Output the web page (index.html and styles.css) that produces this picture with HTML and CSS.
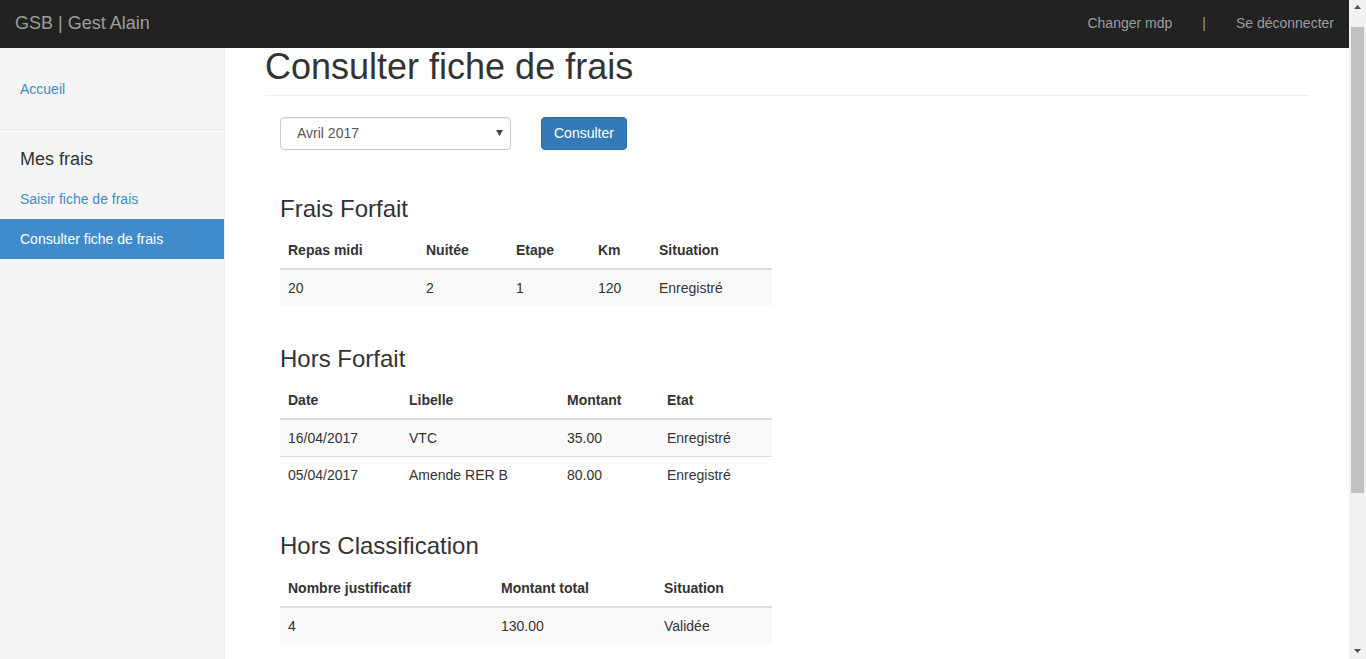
FILE: index.html
```html
<!DOCTYPE html>
<html lang="fr">
<head>
<meta charset="utf-8">
<title>GSB - Consulter fiche de frais</title>
<link rel="stylesheet" href="styles.css">
</head>
<body>
<div class="page">
  <nav class="navbar">
    <a class="brand" href="#">GSB | Gest Alain</a>
    <ul class="nav-right">
      <li><a href="#">Changer mdp</a></li>
      <li class="sep">|</li>
      <li><a href="#">Se déconnecter</a></li>
    </ul>
  </nav>
  <div class="layout">
    <aside class="sidebar">
      <ul class="nav-side">
        <li><a href="#">Accueil</a></li>
      </ul>
      <div class="side-divider"></div>
      <h4 class="side-title">Mes frais</h4>
      <ul class="nav-side">
        <li><a href="#">Saisir fiche de frais</a></li>
        <li class="active"><a href="#">Consulter fiche de frais</a></li>
      </ul>
    </aside>
    <main class="main">
      <div class="page-header"><h1>Consulter fiche de frais</h1></div>
      <form class="month-form">
        <div class="select-wrap">
          <select class="form-control">
            <option>Avril 2017</option>
            <option>Mars 2017</option>
          </select>
          <svg class="caret" width="7" height="6" viewBox="0 0 7 6"><path d="M0 0h7L3.5 6z" fill="#444"/></svg>
        </div>
        <button type="button" class="btn">Consulter</button>
      </form>

      <section class="block">
        <h3>Frais Forfait</h3>
        <table class="table">
          <colgroup><col style="width:138px"><col style="width:90px"><col style="width:82px"><col style="width:61px"><col></colgroup>
          <thead><tr><th>Repas midi</th><th>Nuitée</th><th>Etape</th><th>Km</th><th>Situation</th></tr></thead>
          <tbody><tr><td>20</td><td>2</td><td>1</td><td>120</td><td>Enregistré</td></tr></tbody>
        </table>
      </section>

      <section class="block">
        <h3>Hors Forfait</h3>
        <table class="table">
          <colgroup><col style="width:121px"><col style="width:158px"><col style="width:100px"><col></colgroup>
          <thead><tr><th>Date</th><th>Libelle</th><th>Montant</th><th>Etat</th></tr></thead>
          <tbody>
            <tr><td>16/04/2017</td><td>VTC</td><td>35.00</td><td>Enregistré</td></tr>
            <tr><td>05/04/2017</td><td>Amende RER B</td><td>80.00</td><td>Enregistré</td></tr>
          </tbody>
        </table>
      </section>

      <section class="block">
        <h3>Hors Classification</h3>
        <table class="table">
          <colgroup><col style="width:213px"><col style="width:163px"><col></colgroup>
          <thead><tr><th>Nombre justificatif</th><th>Montant total</th><th>Situation</th></tr></thead>
          <tbody><tr><td>4</td><td>130.00</td><td>Validée</td></tr></tbody>
        </table>
      </section>
    </main>
  </div>
</div>
<div class="scrollbar" aria-hidden="true">
  <svg class="sb-arrow" width="7" height="4" viewBox="0 0 7 4"><path d="M3.5 0L7 4H0z" fill="#505050"/></svg>
  <div class="sb-track"><div class="sb-thumb"></div></div>
  <svg class="sb-arrow" width="7" height="4" viewBox="0 0 7 4"><path d="M0 0h7L3.5 4z" fill="#505050"/></svg>
</div>
</body>
</html>
```

FILE: styles.css
```css
html {
  overflow: hidden;
}
* {
  box-sizing: border-box;
}
body {
  margin: 0;
  font-family: "Liberation Sans", Arial, Helvetica, sans-serif;
  font-size: 14px;
  line-height: 20px;
  color: #333;
  background: #fff;
}
a {
  text-decoration: none;
}
ul {
  list-style: none;
  margin: 0;
  padding: 0;
}
.page {
  margin-right: 17px;
}

/* Navbar */
.navbar {
  height: 48px;
  background: #222;
  display: flex;
  justify-content: space-between;
  align-items: flex-start;
}
.brand {
  padding: 13px 15px;
  font-size: 18px;
  line-height: 20px;
  color: #9d9d9d;
}
.nav-right {
  display: flex;
}
.nav-right li {
  padding: 13px 15px;
  line-height: 20px;
  color: #9d9d9d;
}
.nav-right a {
  color: #9d9d9d;
}

/* Layout */
.layout {
  display: flex;
  min-height: 835px;
}
.sidebar {
  width: 225px;
  flex: none;
  background: #f5f5f5;
  border-right: 1px solid #eee;
  padding-top: 21px;
}
.nav-side li a {
  display: block;
  padding: 10px 20px;
  color: #428bca;
}
.nav-side li.active a {
  background: #428bca;
  color: #fff;
}
.side-divider {
  height: 1px;
  background: #e8e8e8;
  margin: 20px -1px 0 0;
}
.side-title {
  margin: 18px 0 9px;
  padding: 0 20px;
  font-size: 18px;
  font-weight: 500;
  line-height: 22px;
  color: #333;
}

/* Main */
.main {
  flex: 1;
  padding: 0 40px;
}
.page-header {
  padding-bottom: 8px;
  border-bottom: 1px solid #eee;
  margin: -1px 0 21px;
}
.page-header h1 {
  margin: 0;
  font-size: 36px;
  font-weight: 500;
  line-height: 39.6px;
}
.month-form {
  display: flex;
  gap: 30px;
  padding-left: 15px;
  margin: 0 0 26px;
}
.select-wrap {
  position: relative;
  width: 231px;
}
.form-control {
  appearance: none;
  -webkit-appearance: none;
  width: 100%;
  height: 33px;
  padding: 5px 24px 6px 16px;
  font-family: inherit;
  font-size: 14px;
  color: #555;
  background: #fff;
  border: 1px solid #ccc;
  border-radius: 4px;
  box-shadow: inset 0 1px 1px rgba(0,0,0,.075);
}
.caret {
  position: absolute;
  right: 8px;
  top: 13px;
  pointer-events: none;
}
.btn {
  height: 33px;
  padding: 5px 12px 6px;
  font-family: inherit;
  font-size: 14px;
  line-height: 20px;
  color: #fff;
  background: #337ab7;
  border: 1px solid #2e6da4;
  border-radius: 4px;
  cursor: pointer;
}
.block {
  display: flow-root;
  padding-left: 15px;
}
.block h3 {
  margin: 20px 0 10px;
  font-size: 24px;
  font-weight: 500;
  line-height: 26.4px;
}
.table {
  width: 492px;
  border-collapse: collapse;
  margin-bottom: 20px;
  table-layout: fixed;
}
.table th,
.table td {
  padding: 8px;
  text-align: left;
  line-height: 20px;
  white-space: nowrap;
}
.table th {
  font-weight: bold;
  border-bottom: 2px solid #ddd;
}
.table td {
  border-top: 1px solid #ddd;
}
.table tbody tr:nth-child(odd) {
  background: #f9f9f9;
}

/* Simulated browser scrollbar */
.scrollbar {
  position: fixed;
  top: 0;
  right: 0;
  bottom: 0;
  width: 17px;
  background: #f1f1f1;
  display: flex;
  flex-direction: column;
  align-items: center;
}
.sb-arrow {
  flex: none;
  margin: 5px 0 8px;
}
.sb-arrow:last-child {
  margin: 6px 0 6px;
}
.sb-track {
  flex: 1;
  width: 100%;
  padding: 10px 2px 0;
}
.sb-thumb {
  height: 466px;
  background: #c1c1c1;
}
```
